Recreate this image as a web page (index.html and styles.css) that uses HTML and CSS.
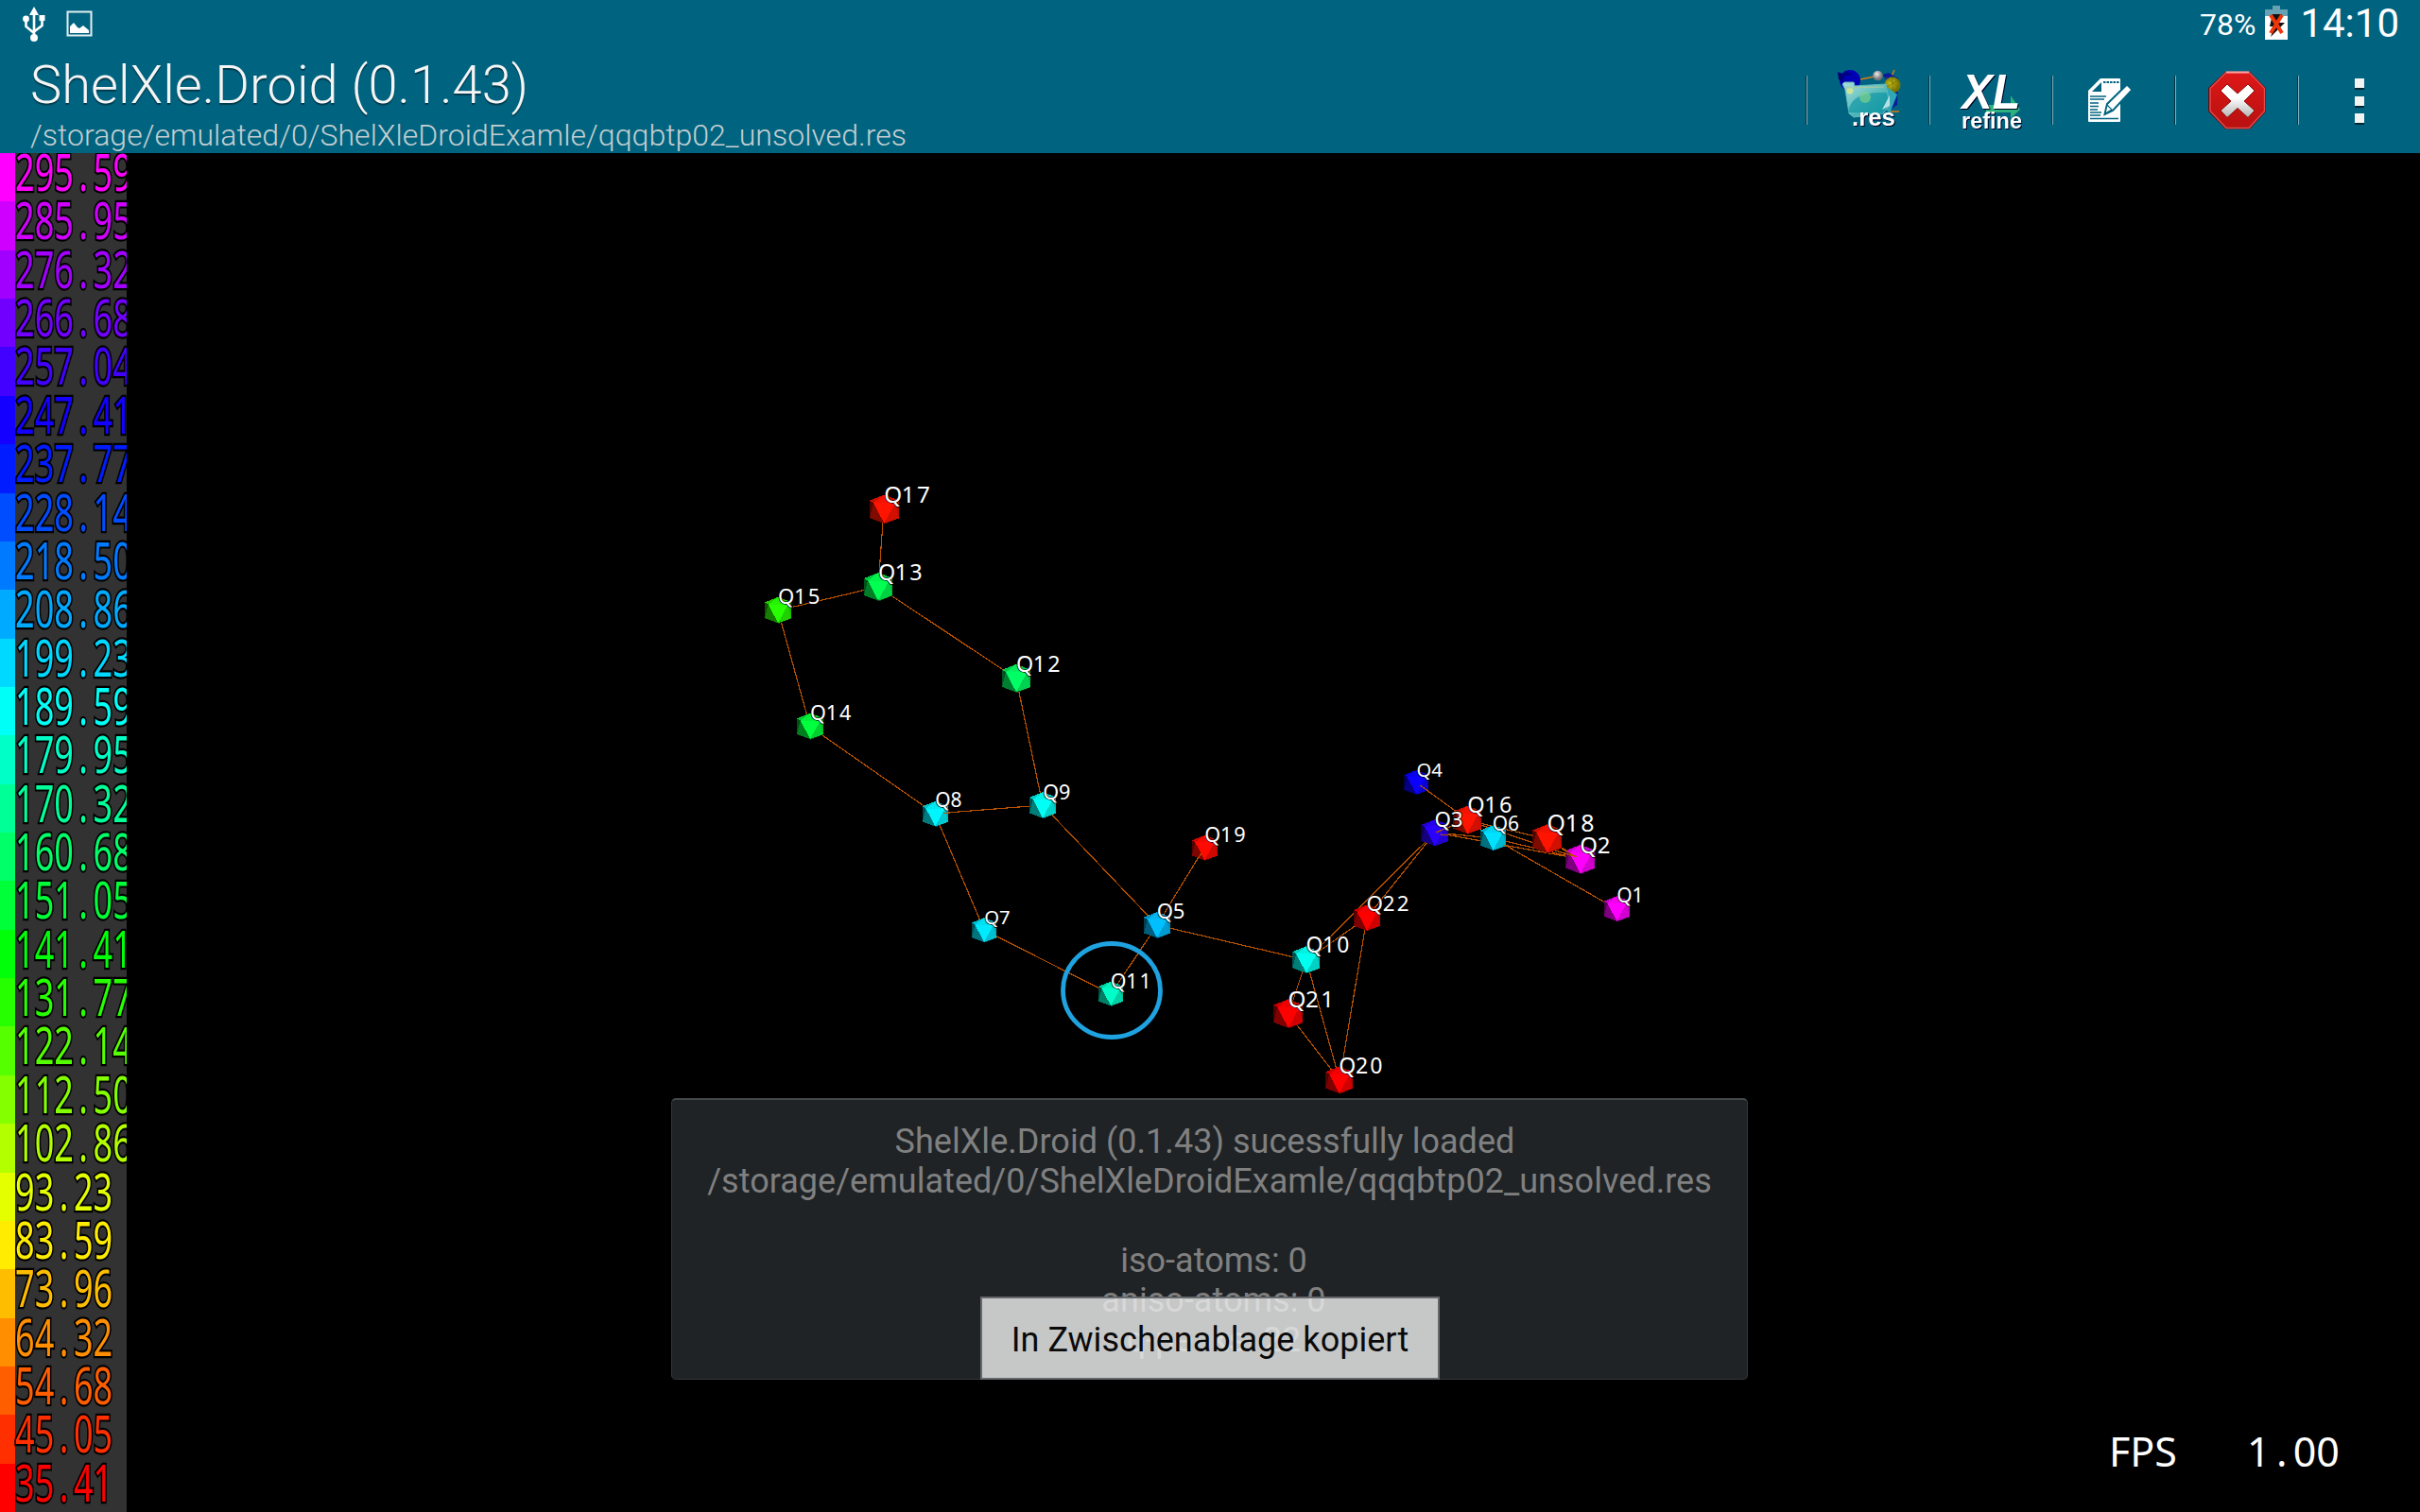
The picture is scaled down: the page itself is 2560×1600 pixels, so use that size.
FILE: index.html
```html
<!DOCTYPE html>
<html lang="de">
<head>
<meta charset="utf-8">
<title>ShelXle.Droid</title>
<link rel="stylesheet" href="styles.css">
</head>
<body>
<div class="screen">
  <header class="top">
    <div class="status">
      <div class="status-left">
        <svg class="usb" width="26" height="38" viewBox="0 0 26 38"><g fill="none" stroke="#fff" stroke-width="2.6"><path d="M13 6v27M4.500 15v7l8.500 7M21.500 14v7L13 27.500"/></g><path fill="#fff" d="M13 1l5 9H8z"/><circle cx="13" cy="34" r="4" fill="#fff"/><circle cx="4.500" cy="14" r="3.400" fill="#fff"/><path fill="#fff" d="M18.500 10h6v6h-6z"/></svg>
        <svg width="28" height="28" viewBox="0 0 28 28"><path fill="none" stroke="#e3eef1" stroke-width="2" d="M1.500 1.500h25v25h-25z"/><path fill="#fff" d="M4 22v-5l4-4 4 5 2 1 4-3 6 5v3H4z"/></svg>
      </div>
      <div class="status-right">
        <span class="percent">78%</span>
        <svg width="24" height="36" viewBox="0 0 24 36"><path fill="#66a2b3" d="M8 0h8v4h8v8H0V4h8z"/><path fill="#fff" d="M0 11h24v25H0z"/><path fill="#111" d="M8 9h10l-3 9h6L6 33l4-11H5z"/><path fill="none" stroke="#f0370c" stroke-width="4" d="M6 10l12 19M18 10L6 29"/></svg>
        <span class="clock">14:10</span>
      </div>
    </div>
    <div class="actionbar">
      <div class="titles">
        <h1 class="title">ShelXle.Droid (0.1.43)</h1>
        <div class="subtitle">/storage/emulated/0/ShelXleDroidExamle/qqqbtp02_unsolved.res</div>
      </div>
      <nav class="actions">
        <div class="action">
          <svg width="129" height="110" viewBox="1 0 129 110">
            <defs>
              <linearGradient id="folder" x1="0" y1="0" x2="1" y2="1"><stop offset="0" stop-color="#a9e0dc"/><stop offset=".5" stop-color="#5dbdbd"/><stop offset="1" stop-color="#149ba6"/></linearGradient>
              <radialGradient id="ball" cx=".4" cy=".35"><stop offset="0" stop-color="#eee"/><stop offset="1" stop-color="#777"/></radialGradient>
              <radialGradient id="gold" cx=".4" cy=".4"><stop offset="0" stop-color="#c9c21d"/><stop offset="1" stop-color="#777400"/></radialGradient>
            </defs>
            <path d="M34 27l6 5M57 34l20-4M90 31l3-7M88 68h10" stroke="#d97b12" stroke-width="1.500"/>
            <circle cx="46" cy="35" r="11" fill="#0000b4"/><path d="M33 26l8 3-3 8-4-3zM41 25l7 4-8 1z" fill="#000078"/>
            <path d="M80 29l7-2 10 6-1 28-7 5-3-30z" fill="#0a1d9c"/>
            <circle cx="91" cy="40" r="8.500" fill="url(#gold)"/>
            <path d="M84 32l13 10M83 43l14-8M90 31l2 18" stroke="#777000" stroke-width=".7"/>
            <path d="M85 42l11 8-8 20-6-6z" fill="#2fa8b5"/>
            <path d="M38 39l2-2 10 0 1 4 33-2 4 22-7 9-31 4-5-4-4-25z" fill="url(#folder)" stroke="#65b7bd"/>
            <path d="M44 69c2-14 12-22 41-21l2 12-7 10z" fill="#0d95a3" opacity=".65"/>
            <circle cx="62" cy="53" r="6" fill="#79d08c" opacity=".7"/><circle cx="46" cy="46" r="3.500" fill="#dbe88f" opacity=".8"/>
            <path d="M42 43l40-1" stroke="#aec896" stroke-width="1"/>
            <path d="M80 66l8-15v11z" fill="#b6dfe6"/>
            <circle cx="75.500" cy="30" r="5.300" fill="url(#ball)"/>
            <text class="icon-text" x="48" y="83" font-size="25" textLength="46" lengthAdjust="spacingAndGlyphs">.res</text>
          </svg>
        </div>
        <div class="action">
          <svg width="129" height="110" viewBox="1 0 129 110">
            <path d="M60 61h26V51l10 15-10 9v-6H60z" fill="#2cb27c"/>
            <text class="icon-text" font-style="italic" x="34.500" y="64.500" font-size="51" textLength="62" lengthAdjust="spacingAndGlyphs">XL</text>
            <text class="icon-text" x="34" y="86" font-size="24" textLength="64" lengthAdjust="spacingAndGlyphs">refine</text>
          </svg>
        </div>
        <div class="action">
          <svg width="129" height="110" viewBox="1 0 129 110">
            <path fill="#fff" d="M51 33h20a1 1 0 0 1 1 1v44a1 1 0 0 1-1 1H39a1 1 0 0 1-1-1V46z"/>
            <path fill="#006480" d="M52 37v10H42z"/>
            <g stroke="#006480" fill="none"><path stroke-width="2" stroke-dasharray="2.500 1" d="M54 37h17"/><path stroke-width="1.600" d="M40 52h17M40 55h15M40 59h9M40 62.500h9M40 66h8M40 69h12M40 72h11M40 75.500h30"/></g>
            <path d="M55.500 71l2.500-11 21-20.500 5.500 5.500-20.500 22z" fill="#fff" stroke="#006480" stroke-width="2"/>
            <path d="M56 70l2-9 5 5z" fill="#fff" stroke="#006480" stroke-width="1.200"/>
          </svg>
        </div>
        <div class="action">
          <svg width="129" height="110" viewBox="1 0 129 110">
            <defs><linearGradient id="cross" x1="0" y1="0" x2="0" y2="1"><stop offset=".4" stop-color="#fff"/><stop offset="1" stop-color="#b4b4b4"/></linearGradient><linearGradient id="stop" x1="0" y1="0" x2="0" y2="1"><stop offset="0" stop-color="#de1818"/><stop offset="1" stop-color="#b81010"/></linearGradient></defs>
            <path d="M53 26h26l17 17v25L79 86.500H53L35 68V43z" fill="#5e0c12"/>
            <path d="M54 26.500h24l16.500 17v24L78 85.500H54l-17-18v-24z" fill="url(#stop)" stroke="#e04a4a" stroke-width="1.500"/>
            <path d="M54 26.500h24" stroke="#ffa0a0" stroke-width="2"/>
            <path d="M55 39l11 10 11-10 7 7-11 11 11 10-7 7.500-11-10-11 10-7-7.500 11-10-11-11z" fill="url(#cross)" stroke="#8b0f0f" stroke-width="1"/>
          </svg>
        </div>
        <div class="action">
          <svg width="129" height="110" viewBox="1 0 129 110"><path fill="#002733" d="M61 35h10v10H61zM61 54h10v10H61zM61 72h10v10H61z"/><path fill="#f3f3f3" d="M61 33h10v10H61zM61 52h10v10H61zM61 70h10v10H61z"/></svg>
        </div>
      </nav>
    </div>
  </header>
  <main class="view">
    <div class="legend">
      <div class="row" style="--c:hsl(300 100% 50%)"><span class="val">295<i>.</i>59</span></div>
      <div class="row" style="--c:hsl(288.9 100% 50%)"><span class="val">285<i>.</i>95</span></div>
      <div class="row" style="--c:hsl(277.8 100% 50%)"><span class="val">276<i>.</i>32</span></div>
      <div class="row" style="--c:hsl(266.7 100% 50%)"><span class="val">266<i>.</i>68</span></div>
      <div class="row" style="--c:hsl(255.6 100% 50%)"><span class="val">257<i>.</i>04</span></div>
      <div class="row" style="--c:hsl(244.4 100% 50%)"><span class="val">247<i>.</i>41</span></div>
      <div class="row" style="--c:hsl(233.3 100% 50%)"><span class="val">237<i>.</i>77</span></div>
      <div class="row" style="--c:hsl(222.2 100% 50%)"><span class="val">228<i>.</i>14</span></div>
      <div class="row" style="--c:hsl(211.1 100% 50%)"><span class="val">218<i>.</i>50</span></div>
      <div class="row" style="--c:hsl(200 100% 50%)"><span class="val">208<i>.</i>86</span></div>
      <div class="row" style="--c:hsl(188.9 100% 50%)"><span class="val">199<i>.</i>23</span></div>
      <div class="row" style="--c:hsl(177.8 100% 50%)"><span class="val">189<i>.</i>59</span></div>
      <div class="row" style="--c:hsl(166.7 100% 50%)"><span class="val">179<i>.</i>95</span></div>
      <div class="row" style="--c:hsl(155.6 100% 50%)"><span class="val">170<i>.</i>32</span></div>
      <div class="row" style="--c:hsl(144.4 100% 50%)"><span class="val">160<i>.</i>68</span></div>
      <div class="row" style="--c:hsl(133.3 100% 50%)"><span class="val">151<i>.</i>05</span></div>
      <div class="row" style="--c:hsl(122.2 100% 50%)"><span class="val">141<i>.</i>41</span></div>
      <div class="row" style="--c:hsl(111.1 100% 50%)"><span class="val">131<i>.</i>77</span></div>
      <div class="row" style="--c:hsl(100 100% 50%)"><span class="val">122<i>.</i>14</span></div>
      <div class="row" style="--c:hsl(88.9 100% 50%)"><span class="val">112<i>.</i>50</span></div>
      <div class="row" style="--c:hsl(77.8 100% 50%)"><span class="val">102<i>.</i>86</span></div>
      <div class="row" style="--c:hsl(66.7 100% 50%)"><span class="val">93<i>.</i>23</span></div>
      <div class="row" style="--c:hsl(55.6 100% 50%)"><span class="val">83<i>.</i>59</span></div>
      <div class="row" style="--c:hsl(44.4 100% 50%)"><span class="val">73<i>.</i>96</span></div>
      <div class="row" style="--c:hsl(33.3 100% 50%)"><span class="val">64<i>.</i>32</span></div>
      <div class="row" style="--c:hsl(22.2 100% 50%)"><span class="val">54<i>.</i>68</span></div>
      <div class="row" style="--c:hsl(11.1 100% 50%)"><span class="val">45<i>.</i>05</span></div>
      <div class="row" style="--c:hsl(0 100% 50%)"><span class="val">35<i>.</i>41</span></div>
    </div>
    <svg class="molecule" viewBox="134 162 2426 1438">
      <defs>
        <g id="peak">
          <path fill="currentColor" d="M0-15L15-9.300V9.300L1 15.200-15 9V-9z"/>
          <path opacity=".05" d="M0-15L-11-6.500H11.500z"/>
          <path opacity=".2" d="M0-15L-11-6.500-15-9zM0-15L11.500-6.500 15-9.300z"/>
          <path opacity=".28" d="M11.500-6.500L15-9.300V9.300z"/>
          <path opacity=".18" d="M11.500-6.500L15 9.300 0 14.400z"/>
          <path opacity=".68" d="M-11-6.500L-15-9V9z"/>
          <path opacity=".5" d="M-11-6.500L-15 9 0 14.400z"/>
          <path opacity=".7" d="M15 9.300L0 14.400l1 .8zM-15 9L0 14.400l1 .8z"/>
        </g>
      </defs>
      <path class="bond" d="M935 539L929 621 823 646 857 769 989 861 1103 852 1075 718 929 621M989 861L1041 984 1175 1052 1224 979 1103 852M1224 979L1274 897M1224 979L1382 1016 1446 971 1417 1143 1382 1016 1363 1073 1417 1143M1382 1016L1518 881 1446 971M1498 828L1579.500 887M1518 881L1579.500 887 1710 962M1579.500 887L1672 909M1518 881L1672 909M1518 881L1552 868 1637 888 1672 909M1552 868L1672 909"/>
      <g class="peaks">
        <use href="#peak" color="#0b00ff" transform="translate(1498.300 828) scale(.87)"/>
        <use href="#peak" color="#2a00ff" transform="translate(1517.700 881.300) scale(.95)"/>
        <use href="#peak" color="#ff1400" transform="translate(1552.300 867.700) scale(1)"/>
        <use href="#peak" color="#00e1ff" transform="translate(1579.500 886.700) scale(.9)"/>
        <use href="#peak" color="#f0f" transform="translate(1671.700 909.300) scale(1.030)"/>
        <use href="#peak" color="#ff1400" transform="translate(1636.700 887.700) scale(1.030)"/>
        <use href="#peak" color="#f0f" transform="translate(1710.300 961.700) scale(.9)"/>
        <use href="#peak" color="#ff1400" transform="translate(935.300 538.900) scale(1.030)"/>
        <use href="#peak" color="#00ff50" transform="translate(929 621) scale(1)"/>
        <use href="#peak" color="#28ff00" transform="translate(823 645.700) scale(.93)"/>
        <use href="#peak" color="#00ff64" transform="translate(1075 717.900) scale(1)"/>
        <use href="#peak" color="#00ff3c" transform="translate(857 768.600) scale(.93)"/>
        <use href="#peak" color="#00f5ff" transform="translate(989.300 861.400) scale(.9)"/>
        <use href="#peak" color="#00fff5" transform="translate(1103 852.100) scale(.93)"/>
        <use href="#peak" color="#00eaff" transform="translate(1041 984.300) scale(.87)"/>
        <use href="#peak" color="#ff0a00" transform="translate(1274.300 897.300) scale(.9)"/>
        <use href="#peak" color="#00bfff" transform="translate(1224 979) scale(.93)"/>
        <use href="#peak" color="#00ffc8" transform="translate(1175 1051.700) scale(.87)"/>
        <use href="#peak" color="#00fff0" transform="translate(1381.700 1015.700) scale(.96)"/>
        <use href="#peak" color="#f00" transform="translate(1446 971.300) scale(.93)"/>
        <use href="#peak" color="#f00" transform="translate(1362.700 1072.700) scale(1.030)"/>
        <use href="#peak" color="#f00" transform="translate(1416.700 1143) scale(.96)"/>
      </g>
      <path class="bond" d="M998 860.500L1010 859.500M1271 903L1265 912M1502 831L1511 837M1519 881L1533 875M1524 883L1535 884M1668 907L1652 898M1668 907L1652 902M1590 894L1600 898"/>
      <g class="labels">
        <text x="8.300 23.800" transform="translate(1499.300 822) scale(.87)">Q4</text>
        <text x="8.300 23.800" transform="translate(1518.300 875) scale(.96)">Q3</text>
        <text x="8.300 23.800 39.300" transform="translate(1553 860.400) scale(1.010)">Q16</text>
        <text x="8.300 23.800" transform="translate(1579.500 879.200) scale(.9)">Q6</text>
        <text x="8.300 23.800 39.300" transform="translate(1637.300 880) scale(1.070)">Q18</text>
        <text x="8.300 23.800" transform="translate(1672 902.700) scale(1.030)">Q2</text>
        <text x="8.300 23.800" transform="translate(1711 954.700) scale(.9)">Q1</text>
        <text x="8.300 23.800 39.300" transform="translate(936 532.300) scale(1.040)">Q17</text>
        <text x="8.300 23.800 39.300" transform="translate(929.700 614) scale(1)">Q13</text>
        <text x="8.300 23.800 39.300" transform="translate(823.700 638.700) scale(.95)">Q15</text>
        <text x="8.300 23.800 39.300" transform="translate(1075.700 711.400) scale(1)">Q12</text>
        <text x="8.300 23.800 39.300" transform="translate(857.700 762) scale(.93)">Q14</text>
        <text x="8.300 23.800" transform="translate(990 854.300) scale(.9)">Q8</text>
        <text x="8.300 23.800" transform="translate(1104 845.700) scale(.93)">Q9</text>
        <text x="8.300 23.800" transform="translate(1042 977.500) scale(.87)">Q7</text>
        <text x="8.300 23.800 39.300" transform="translate(1275 890.700) scale(.93)">Q19</text>
        <text x="8.300 23.800" transform="translate(1224.500 972) scale(.95)">Q5</text>
        <text x="8.300 23.800 39.300" transform="translate(1175.500 1045.700) scale(.92)">Q11</text>
        <text x="8.300 23.800 39.300" transform="translate(1382.300 1008.400) scale(.98)">Q10</text>
        <text x="8.300 23.800 39.300" transform="translate(1446.300 964.400) scale(.96)">Q22</text>
        <text x="8.300 23.800 39.300" transform="translate(1363.300 1065.700) scale(1.040)">Q21</text>
        <text x="8.300 23.800 39.300" transform="translate(1417 1135.700) scale(.99)">Q20</text>
      </g>
      <ellipse cx="1176" cy="1048" rx="51.500" ry="49.500" fill="none" stroke="#1fa2e0" stroke-width="4.800"/>
    </svg>
    <div class="fps"><span>FPS</span><span class="rate">1<i>.</i>00</span></div>
    <div class="toast info">
      <p class="shift">ShelXle.Droid (0.1.43) sucessfully loaded</p>
      <p>/storage/emulated/0/ShelXleDroidExamle/qqqbtp02_unsolved.res</p>
      <p>&nbsp;</p>
      <p class="indent">iso-atoms: 0</p>
      <p class="indent">aniso-atoms: 0</p>
      <p class="indent">q-peaks: 22</p>
    </div>
    <div class="toast copied">In Zwischenablage kopiert</div>
  </main>
</div>
</body>
</html>
```
FILE: styles.css
```css
* { box-sizing: border-box; }
body { margin: 0; background: #000; font-family: Roboto, "Noto Sans", sans-serif; }
.screen { width: 2560px; height: 1600px; display: flex; flex-direction: column; overflow: hidden; background: #000; }

.top { height: 162px; background: #006480; color: #fff; flex: none; }
.status { height: 50px; display: flex; justify-content: space-between; }
.status-left { display: flex; align-items: center; gap: 21px; padding-left: 23px; }
.status-right { display: flex; align-items: flex-start; padding-right: 22px; }
.status-right svg { margin: 6px 13px 0 10px; }
.percent { font-size: 32px; line-height: 38px; margin-top: 7px; }
.clock { font-size: 42px; line-height: 50px; }

.actionbar { height: 112px; display: flex; justify-content: space-between; }
.titles { padding-left: 32px; }
.title { margin: 8px 0 0; font-size: 56px; line-height: 64px; font-weight: 300; letter-spacing: .07px; color: #f5f5f5; text-shadow: 0 2px 1px #003a4c; white-space: nowrap; }
.subtitle { margin-top: 2px; font-size: 32px; line-height: 38px; font-weight: 300; letter-spacing: .03px; color: #c4ced1; white-space: nowrap; }
.actions { display: flex; height: 110px; }
.action { width: 130px; display: flex; background: linear-gradient(90deg, #00303e 1px, #7fb0be 1px) no-repeat 0 30px / 2px 52px; }
.action svg { margin-left: 2px; flex: none; }
.action:last-child svg { margin-left: 1px; }
.icon-text { font-family: "Liberation Sans", Arial, sans-serif; font-weight: 700; fill: #fff; filter: drop-shadow(1px 1.500px 0 #002); }

.view { position: relative; flex: 1; display: flex; min-height: 0; }
.legend { width: 134px; background: #323232; display: flex; flex-direction: column; overflow: hidden; font-family: "Noto Sans", sans-serif; }
.row { flex: 1 1 0; min-height: 0; border-left: 16px solid var(--c); color: var(--c); line-height: 38px; font-size: 54px; white-space: nowrap; }
.val { display: block; width: 176px; transform: scaleX(.668); transform-origin: 0 0; -webkit-text-stroke: 4.400px #000; paint-order: stroke fill; }
i { font-style: normal; display: inline-block; width: .572em; text-align: center; }
.molecule { width: 2426px; height: 1438px; flex: none; }
.bond { fill: none; stroke: #b85000; stroke-width: 1.200; shape-rendering: crispEdges; }
.peaks { shape-rendering: crispEdges; }
.labels text { font-family: "Noto Sans", sans-serif; font-size: 23.300px; text-anchor: middle; fill: #fff; stroke: #000; stroke-width: 1.500px; paint-order: stroke fill; }

.fps { position: absolute; left: 2231px; top: 1344px; display: flex; gap: 74px; color: #fff; font: 43px/60px "Noto Sans", sans-serif; white-space: nowrap; }
.rate { letter-spacing: -.300px; }
.toast { position: absolute; font-size: 36px; line-height: 42px; letter-spacing: .030px; text-align: center; white-space: nowrap; }
.toast p { margin: 0; }
.info { left: 710px; top: 1000px; width: 1139px; height: 298px; padding-top: 23px; background: #1f2326; border: 1px solid #33383b; border-top: 2px solid #43484b; border-radius: 5px; color: #808080; }
.shift { padding-right: 10px; }
.indent { padding-left: 9px; }
.copied { left: 1037px; top: 1210px; width: 486px; height: 88px; padding-top: 23px; background: rgba(236, 236, 236, .82); background-clip: padding-box; border: 2px solid #676a6c; color: #0a0a0a; }
```
